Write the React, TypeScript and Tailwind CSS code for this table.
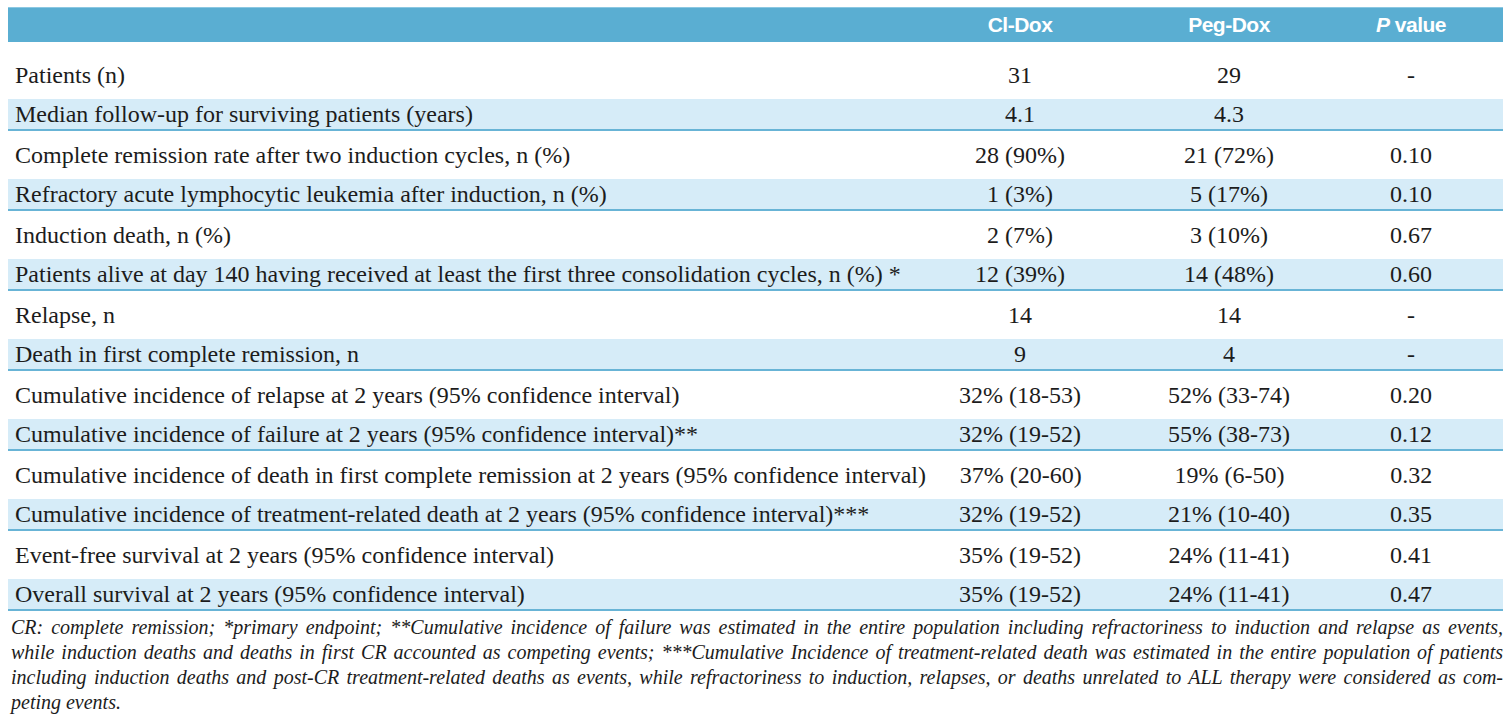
const rows: [string, string, string, string][] = [
  ['Patients (n)', '31', '29', '-'],
  ['Median follow-up for surviving patients (years)', '4.1', '4.3', ''],
  ['Complete remission rate after two induction cycles, n (%)', '28 (90%)', '21 (72%)', '0.10'],
  ['Refractory acute lymphocytic leukemia after induction, n (%)', '1 (3%)', '5 (17%)', '0.10'],
  ['Induction death, n (%)', '2 (7%)', '3 (10%)', '0.67'],
  ['Patients alive at day 140 having received at least the first three consolidation cycles, n (%) *', '12 (39%)', '14 (48%)', '0.60'],
  ['Relapse, n', '14', '14', '-'],
  ['Death in first complete remission, n', '9', '4', '-'],
  ['Cumulative incidence of relapse at 2 years (95% confidence interval)', '32% (18-53)', '52% (33-74)', '0.20'],
  ['Cumulative incidence of failure at 2 years (95% confidence interval)**', '32% (19-52)', '55% (38-73)', '0.12'],
  ['Cumulative incidence of death in first complete remission at 2 years (95% confidence interval)', '37% (20-60)', '19% (6-50)', '0.32'],
  ['Cumulative incidence of treatment-related death at 2 years (95% confidence interval)***', '32% (19-52)', '21% (10-40)', '0.35'],
  ['Event-free survival at 2 years (95% confidence interval)', '35% (19-52)', '24% (11-41)', '0.41'],
  ['Overall survival at 2 years (95% confidence interval)', '35% (19-52)', '24% (11-41)', '0.47'],
]

const notes = [
  'CR: complete remission; *primary endpoint; **Cumulative incidence of failure was estimated in the entire population including refractoriness to induction and relapse as events,',
  'while induction deaths and deaths in first CR accounted as competing events; ***Cumulative Incidence of treatment-related death was estimated in the entire population of patients',
  'including induction deaths and post-CR treatment-related deaths as events, while refractoriness to induction, relapses, or deaths unrelated to ALL therapy were considered as com-',
]

export default function App() {
  return (
    <div className="min-h-screen bg-white pt-[7px] px-[8px] text-[#1c1c1c] font-['Liberation_Serif',serif]">
      <div className="w-[1495px]">
        {/* Header */}
        <div className="flex h-[35px] items-center bg-[#5aaed2] border-t border-[#8cc8e2] text-white font-bold text-[21px] tracking-[-0.5px] font-['Liberation_Sans_Narrow','Liberation_Sans',sans-serif]">
          <div className="flex-1" />
          <div className="w-[190px] text-center">Cl-Dox</div>
          <div className="w-[228px] text-center">Peg-Dox</div>
          <div className="w-[136px] text-center">
            <span className="italic">P</span> value
          </div>
          <div className="w-[24px]" />
        </div>

        {/* Rows */}
        <div className="mt-[13px]">
          {rows.map((r, i) => (
            <div key={i} className="h-[40px] flex items-center">
              <div
                className={
                  i % 2 === 1
                    ? 'h-[32px] w-full flex items-center bg-[#d6ecf8] border-b-2 border-[#68b4d6] text-[24px]'
                    : 'h-[32px] w-full flex items-center text-[24px]'
                }
              >
                <div className="flex-1 pl-[7px] whitespace-nowrap">{r[0]}</div>
                <div className="w-[190px] text-center">{r[1]}</div>
                <div className="w-[228px] text-center">{r[2]}</div>
                <div className="w-[136px] text-center">{r[3]}</div>
                <div className="w-[24px]" />
              </div>
            </div>
          ))}
        </div>

        {/* Footnote */}
        <div className="italic text-[20px] leading-[25px] pl-[3px]">
          {notes.map((n, i) => (
            <div key={i} className="whitespace-nowrap text-justify [text-align-last:justify]">
              {n}
            </div>
          ))}
          <div className="whitespace-nowrap">peting events.</div>
        </div>
      </div>
    </div>
  )
}
